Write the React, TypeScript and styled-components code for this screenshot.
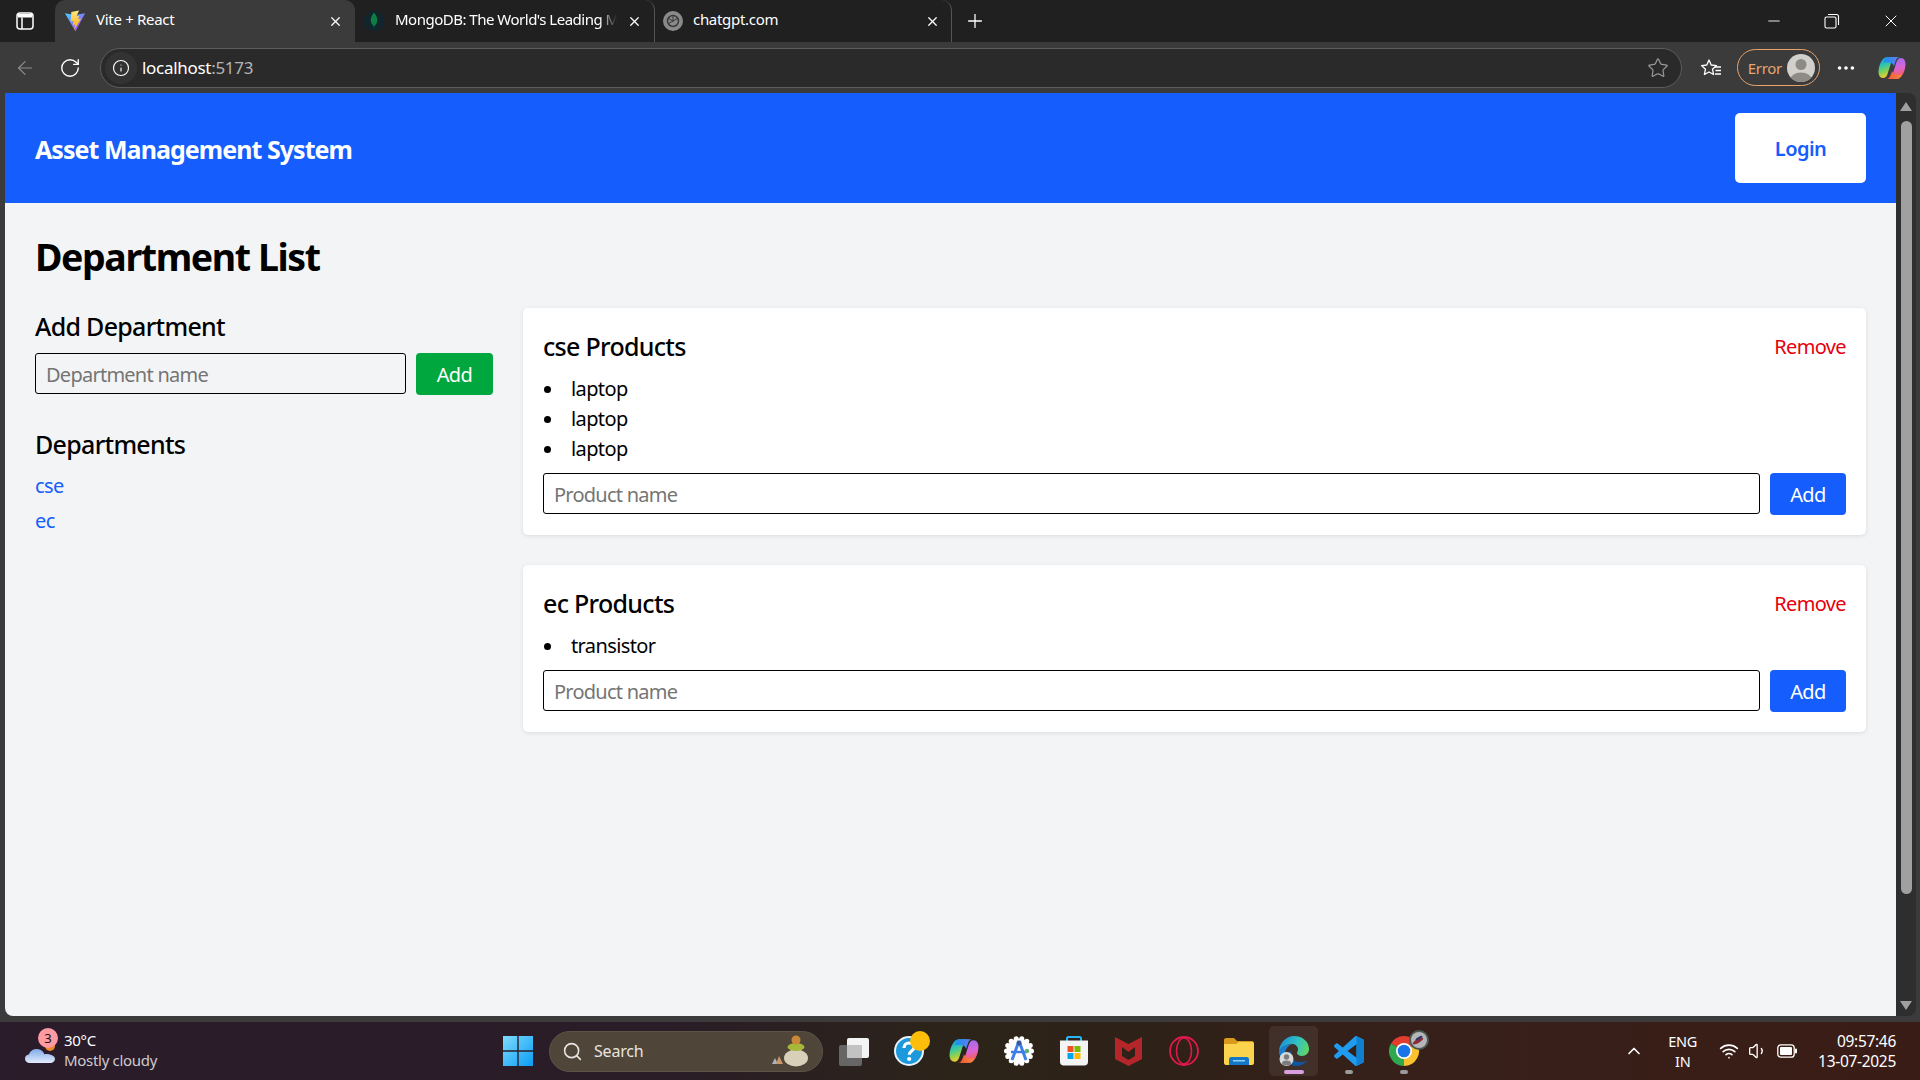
import React from 'react'
import styled, { createGlobalStyle } from 'styled-components'
import { ArrowLeft, ChevronUp, Info, Minus, MoreHorizontal, Plus, RotateCw, Search, Star, Volume1, Wifi, X } from 'lucide-react'

const UI_FONT = '"Noto Sans", "Open Sans", sans-serif'

const GlobalStyle = createGlobalStyle`
  html, body { margin: 0; padding: 0; height: 100%; overflow: hidden; }
  * { box-sizing: border-box; }
  body { font-family: ${UI_FONT}; background: #3b3b3b; }
`

const Screen = styled.div`
  width: 1920px;
  height: 1080px;
  display: flex;
  flex-direction: column;
  background: #3b3b3b;
`

/* browser chrome */
const TabStrip = styled.div`
  height: 42px;
  flex: none;
  display: flex;
  align-items: center;
  background: #202020;
  color: #fff;
`

const SidebarButton = styled.div`
  width: 55px;
  flex: none;
  display: flex;
  justify-content: center;
  padding-right: 5px;
`

const Tab = styled.div<{ $active?: boolean; $width: number; $end: number }>`
  width: ${(p) => p.$width}px;
  height: 42px;
  flex: none;
  display: flex;
  align-items: center;
  gap: 10px;
  padding: 0 ${(p) => p.$end}px 0 ${(p) => (p.$active ? 9 : 8)}px;
  background: ${(p) => (p.$active ? '#3b3b3b' : 'transparent')};
  border-radius: 10px 10px 0 0;
  border-right: ${(p) => (p.$active ? 'none' : '1px solid #555')};
  font-size: 15px;
  letter-spacing: -0.3px;
`

const TabTitle = styled.span`
  flex: 1;
  overflow: hidden;
  white-space: nowrap;
  padding-bottom: 4px;
`

const FadedTitle = styled(TabTitle)`
  letter-spacing: -0.5px;
  mask-image: linear-gradient(to right, #000 92%, transparent);
`

const NewTab = styled.div`
  margin-left: 12px;
  display: flex;
`

const WindowControls = styled.div`
  margin-left: auto;
  display: flex;
  align-items: center;
  gap: 41px;
  padding-right: 19px;
`

const Toolbar = styled.div`
  height: 51px;
  flex: none;
  display: flex;
  align-items: center;
  padding-left: 14px;
  background: #3b3b3b;
  color: #fff;
`

const NavButton = styled.div<{ $gap: number }>`
  display: flex;
  margin-right: ${(p) => p.$gap}px;
`

const AddressBar = styled.div`
  width: 1582px;
  height: 40px;
  flex: none;
  display: flex;
  align-items: center;
  gap: 5px;
  padding: 0 12px 0 4px;
  background: #2a2a2a;
  border: 1px solid #5c5c5c;
  border-radius: 20px;
  font-size: 17px;
  letter-spacing: -0.3px;
`

const InfoChip = styled.div`
  width: 32px;
  height: 32px;
  flex: none;
  display: flex;
  align-items: center;
  justify-content: center;
  border-radius: 50%;
  background: #333;
`

const Host = styled.span`
  color: #fff;
`

const Port = styled.span`
  color: #b5b5b5;
`

const AddressEnd = styled.div`
  margin-left: auto;
  display: flex;
`

const Favourites = styled.div`
  margin-left: 18px;
  display: flex;
`

const ProfilePill = styled.div`
  width: 83px;
  height: 37px;
  margin-left: 15px;
  display: flex;
  align-items: center;
  justify-content: flex-end;
  gap: 5px;
  padding-right: 4px;
  border: 1px solid #e8a46c;
  border-radius: 19px;
  color: #e8a46c;
  font-size: 15px;
  letter-spacing: -0.3px;
`

const Avatar = styled.div`
  width: 28px;
  height: 28px;
  display: flex;
`

const MoreButton = styled.div`
  margin-left: 15px;
  display: flex;
`

const CopilotSlot = styled.div`
  margin-left: 21px;
  display: flex;
`

/* page viewport */
const Viewport = styled.div`
  flex: 1;
  min-height: 0;
  display: flex;
  padding: 0 4px 5px 5px;
`

const Page = styled.div`
  flex: 1;
  display: flex;
  flex-direction: column;
  background: #f3f4f6;
  border-bottom-left-radius: 8px;
  color: #000;
  font-size: 20px;
  line-height: 30px;
  letter-spacing: -0.62px;
`

const Scrollbar = styled.div`
  width: 20px;
  flex: none;
  display: flex;
  flex-direction: column;
  align-items: center;
  justify-content: space-between;
  padding: 9px 0 6px;
  background: #2e2e2e;
  border-radius: 0 8px 8px 0;
`

const ScrollArrow = styled.div<{ $down?: boolean }>`
  width: 0;
  height: 0;
  border-left: 6px solid transparent;
  border-right: 6px solid transparent;
  ${(p) => (p.$down ? 'border-top: 9px solid #a0a0a0;' : 'border-bottom: 9px solid #a0a0a0;')}
`

const ScrollThumb = styled.div`
  width: 11px;
  height: 773px;
  margin-top: 2px;
  margin-bottom: 100px;
  background: #a0a0a0;
  border-radius: 6px;
`

const Header = styled.header`
  height: 110px;
  flex: none;
  display: flex;
  align-items: center;
  justify-content: space-between;
  padding: 20px 30px;
  background: #155dfc;
  color: #fff;
`

const Brand = styled.div`
  padding-top: 2px;
  font-size: 25px;
  font-weight: 700;
  line-height: 35px;
  letter-spacing: -0.95px;
`

const LoginButton = styled.button`
  width: 131px;
  height: 70px;
  border: none;
  border-radius: 5px;
  background: #fff;
  color: #155dfc;
  font: 600 20px ${UI_FONT};
  letter-spacing: -0.55px;
`

const Main = styled.main`
  flex: 1;
  padding: 31px 30px 30px;
`

const PageTitle = styled.h1`
  margin: 0 0 29px;
  font-size: 37.5px;
  line-height: 45px;
  font-weight: 700;
  letter-spacing: -1.4px;
`

const Columns = styled.div`
  display: grid;
  grid-template-columns: 458px 1fr;
  gap: 30px;
  align-items: start;
`

const SectionTitle = styled.h2<{ $top?: number }>`
  margin: ${(p) => p.$top ?? 0}px 0 8px;
  font-size: 25px;
  line-height: 37px;
  font-weight: 500;
  letter-spacing: -0.7px;
`

const FormRow = styled.div`
  display: flex;
  gap: 10px;
`

const TextInput = styled.input<{ $width?: number }>`
  flex: ${(p) => (p.$width ? 'none' : '1')};
  width: ${(p) => (p.$width ? `${p.$width}px` : 'auto')};
  min-width: 0;
  height: 41px;
  padding: 2px 10px 0;
  border: 1px solid #000;
  border-radius: 3px;
  background: transparent;
  color: #000;
  font: 400 20px ${UI_FONT};
  letter-spacing: -0.75px;
  outline: none;

  &::placeholder {
    color: #757575;
    opacity: 1;
  }
`

const SolidButton = styled.button<{ $color: 'green' | 'blue' }>`
  width: ${(p) => (p.$color === 'green' ? 77 : 76)}px;
  height: 42px;
  flex: none;
  border: none;
  border-radius: 4px;
  background: ${(p) => (p.$color === 'green' ? '#00a63e' : '#155dfc')};
  color: #fff;
  font: 400 20px ${UI_FONT};
  letter-spacing: -0.55px;
`

const DepartmentLink = styled.a`
  display: block;
  margin-bottom: 5px;
  color: #155dfc;
`

const Card = styled.section`
  margin-bottom: 30px;
  padding: 20px;
  background: #fff;
  border-radius: 5px;
  box-shadow: 0 1px 4px rgba(0, 0, 0, 0.1);
`

const CardHead = styled.div`
  display: flex;
  align-items: center;
  justify-content: space-between;
  margin-bottom: 8px;
`

const CardTitle = styled.h3`
  margin: 0;
  font-size: 25px;
  line-height: 37px;
  font-weight: 500;
  letter-spacing: -0.7px;
`

const RemoveLink = styled.span`
  color: #e7000b;
`

const ProductList = styled.ul`
  margin: 0 0 9px;
  padding: 1px 0 0;
  list-style: none;
`

const ProductItem = styled.li`
  display: flex;
  align-items: center;

  &::before {
    content: '';
    width: 7px;
    height: 7px;
    margin: 1px 20px 0 1px;
    border-radius: 50%;
    background: #000;
  }
`

/* taskbar */
const Taskbar = styled.div`
  height: 59px;
  flex: none;
  display: grid;
  grid-template-columns: 504px 926px 1fr;
  align-items: center;
  background: linear-gradient(90deg, #2a1c2a 0%, #2a1d27 35%, #2c2419 50%, #2e2118 60%, #38201a 75%, #3a1c16 100%);
  border-top: 1px solid #3e3a3c;
  color: #fff;
`

const Weather = styled.div`
  display: flex;
  align-items: center;
  padding-left: 24px;
`

const WeatherIcon = styled.div`
  position: relative;
  width: 40px;
  height: 40px;
  flex: none;
`

const Badge = styled.span`
  position: absolute;
  top: -3px;
  left: 14px;
  width: 20px;
  height: 20px;
  border-radius: 50%;
  background: #ff9aa2;
  color: #111;
  font-size: 13px;
  line-height: 20px;
  text-align: center;
`

const WeatherText = styled.div`
  padding-bottom: 2px;
  font-size: 15px;
  line-height: 20px;
  letter-spacing: -0.3px;
`

const Muted = styled.div`
  color: #cfcbce;
`

const TaskIcons = styled.div`
  display: flex;
  align-items: center;
`

const StartButton = styled.div`
  width: 30px;
  height: 30px;
  margin-left: -1px;
  margin-right: 16px;
  flex: none;
  display: flex;
`

const SearchBox = styled.div`
  width: 274px;
  height: 41px;
  flex: none;
  display: flex;
  align-items: center;
  gap: 11px;
  padding: 0 10px 0 12px;
  margin-right: 3px;
  background: #4f4539;
  border: 1px solid #5d5348;
  border-radius: 21px;
  color: #e8e4e0;
  font-size: 16px;
  letter-spacing: -0.2px;
`

const SearchArt = styled.div`
  margin-left: auto;
  display: flex;
`

const TaskSlot = styled.div<{ $active?: boolean; $dot?: 'pink' | 'grey' }>`
  position: relative;
  width: 49px;
  height: 50px;
  margin: 0 3px;
  flex: none;
  display: flex;
  align-items: center;
  justify-content: center;
  border-radius: 5px;
  background: ${(p) => (p.$active ? 'rgba(255,255,255,0.07)' : 'transparent')};

  svg {
    overflow: visible;
  }

  &::after {
    content: '';
    display: ${(p) => (p.$dot ? 'block' : 'none')};
    position: absolute;
    bottom: 2px;
    left: 50%;
    transform: translateX(-50%);
    width: ${(p) => (p.$dot === 'pink' ? 20 : 8)}px;
    height: 4px;
    border-radius: 2px;
    background: ${(p) => (p.$dot === 'pink' ? '#d9a0e0' : '#9a9a9a')};
  }
`

const Tray = styled.div`
  display: flex;
  align-items: center;
  justify-content: flex-end;
  padding-right: 24px;
  font-size: 14.5px;
  line-height: 20px;
  letter-spacing: -0.3px;
`

const TrayCaret = styled.div`
  margin-right: 24px;
  display: flex;
`

const LangBlock = styled.div`
  margin-right: 22px;
  text-align: center;
`

const TrayIcons = styled.div`
  display: flex;
  align-items: center;
  gap: 9px;
  margin-right: 21px;
`

const Clock = styled.div`
  padding-bottom: 1px;
  font-size: 15.5px;
  text-align: right;
`

/* drawn icons */
const SidebarIcon = () => (
  <svg width="20" height="20" viewBox="0 0 20 20" fill="none" stroke="#fff" strokeWidth="1.5">
    <rect x="2" y="2" width="16" height="16" rx="3" />
    <path d="M7 6.500V18" />
    <path d="M3 3h14v3.500H3Z" fill="#fff" stroke="none" />
  </svg>
)

const RestoreIcon = () => (
  <svg width="16" height="16" viewBox="0 0 16 16" fill="none" stroke="#fff" strokeWidth="1.100">
    <rect x="1" y="4" width="11" height="11" rx="1.500" />
    <path d="M4 1.500h8.500a2 2 0 0 1 2 2V12" />
  </svg>
)

const ViteLogo = () => (
  <svg width="22" height="22" viewBox="0 0 24 24">
    <defs>
      <linearGradient id="viteA" x1="0" y1="0" x2="1" y2="1">
        <stop offset="0" stopColor="#41d1ff" />
        <stop offset="1" stopColor="#bd34fe" />
      </linearGradient>
      <linearGradient id="viteB" x1="0" y1="0" x2="0" y2="1">
        <stop offset="0" stopColor="#ffea83" />
        <stop offset="1" stopColor="#ffa800" />
      </linearGradient>
    </defs>
    <path d="M1 3.500 12 5.500 23 3.500 12.500 23.500Z" fill="url(#viteA)" />
    <path d="M16.500 0.500 8 2.200l-.6 10.400 3-.7-.9 4.600 2.700-.8-1.200 6L18.600 9.600l-3.200.6 1.100-3.900-3 .5Z" fill="url(#viteB)" />
  </svg>
)

const MongoLeaf = () => (
  <svg width="22" height="22" viewBox="0 0 24 24">
    <circle cx="12" cy="12" r="11" fill="#10262c" />
    <path d="M12 3c3 3.500 4 6.500 3.400 9.500-.5 2.400-2 4-3 5l-.4 3-.4-3c-1-1-2.500-2.600-3-5C8 9.500 9 6.500 12 3Z" fill="#0d7f43" />
  </svg>
)

const ChatgptFavicon = () => (
  <svg width="20" height="20" viewBox="0 0 20 20" fill="none">
    <circle cx="10" cy="10" r="10" fill="#8a8a8a" />
    <circle cx="10" cy="10" r="5.500" stroke="#3a3a3a" strokeWidth="1.500" />
    <path d="M10 4.500v6M5.200 7.200l5 3M5.200 12.800l5-3M14.800 7.200l-5 3" stroke="#3a3a3a" strokeWidth="1" />
  </svg>
)

const FavouritesIcon = () => (
  <svg width="22" height="22" viewBox="0 0 22 22" fill="none" stroke="#fff" strokeWidth="1.300" strokeLinejoin="round">
    <path d="M9 3l2.200 5 5.300.6-4 3.600 1.100 5.300L9 15 4.400 17.500l1.100-5.300-4-3.600 5.300-.6Z" />
    <path d="M15 10h6M15.500 13.500H21M15 17h6" />
  </svg>
)

const AvatarIcon = () => (
  <svg width="28" height="28" viewBox="0 0 28 28">
    <defs>
      <clipPath id="avatarClip">
        <circle cx="14" cy="14" r="14" />
      </clipPath>
    </defs>
    <g clipPath="url(#avatarClip)">
      <rect width="28" height="28" fill="#d2d0cc" />
      <circle cx="14" cy="10.500" r="5.500" fill="#8e8b86" />
      <ellipse cx="14" cy="26" rx="11" ry="7.500" fill="#8e8b86" />
    </g>
  </svg>
)

const CopilotIcon = ({ size = 28, id }: { size?: number; id: string }) => (
  <svg width={size} height={size} viewBox="0 0 28 24">
    <defs>
      <linearGradient id={`${id}A`} x1="0" y1="0" x2="0.300" y2="1">
        <stop offset="0" stopColor="#1592ee" />
        <stop offset="0.450" stopColor="#35c6a8" />
        <stop offset="0.750" stopColor="#8fd14f" />
        <stop offset="1" stopColor="#f6c92f" />
      </linearGradient>
      <linearGradient id={`${id}B`} x1="0.300" y1="0" x2="0.500" y2="1">
        <stop offset="0" stopColor="#9a6cf0" />
        <stop offset="0.500" stopColor="#d964d8" />
        <stop offset="0.800" stopColor="#f0607a" />
        <stop offset="1" stopColor="#f7743a" />
      </linearGradient>
      <linearGradient id={`${id}C`} x1="0" y1="0" x2="1" y2="0">
        <stop offset="0" stopColor="#1592ee" />
        <stop offset="1" stopColor="#6a7cf2" />
      </linearGradient>
      <linearGradient id={`${id}D`} x1="0" y1="0" x2="1" y2="0">
        <stop offset="0" stopColor="#f2503c" />
        <stop offset="1" stopColor="#f58a3c" />
      </linearGradient>
    </defs>
    <path d="M9 1H18C15 1.500 14 4 13 7L9.500 18C9 20 7.500 22 5 22 2 22 .5 19 .5 16 .5 10 4 1 9 1Z" fill={`url(#${id}A)`} />
    <path d="M19 23H10C13 22.500 14 20 15 17L18.500 6C19 4 20.500 2 23 2 26 2 27.500 5 27.500 8 27.500 14 24 23 19 23Z" fill={`url(#${id}B)`} />
    <path d="M9 1H21C19 1.500 18 3.500 17.500 5.500L16 10C15 7.500 13 6.500 10 6.500H5.500C6.500 3.500 7.500 1 9 1Z" fill={`url(#${id}C)`} />
    <path d="M19 23H8C10.500 23 12 21 13 18L14 15C15 18 17 19 20 19H23.500C22.500 21.500 20.500 23 19 23Z" fill={`url(#${id}D)`} />
  </svg>
)

const BatteryIcon = () => (
  <svg width="20" height="14" viewBox="0 0 20 14" fill="none">
    <rect x="0.800" y="0.800" width="16.400" height="12.400" rx="3" stroke="#fff" strokeWidth="1.300" />
    <rect x="3" y="3" width="12" height="8" rx="1" fill="#fff" />
    <rect x="18" y="4.500" width="2" height="5" rx="1" fill="#fff" />
  </svg>
)

const CloudIcon = () => (
  <svg width="40" height="40" viewBox="0 0 40 40">
    <defs>
      <linearGradient id="cloudFill" x1="0" y1="0" x2="0" y2="1">
        <stop offset="0" stopColor="#7fabea" />
        <stop offset="1" stopColor="#e2ebfb" />
      </linearGradient>
    </defs>
    <circle cx="26" cy="15" r="5" fill="#f08a24" />
    <path d="M6 32c-3 0-5-1.800-5-4.300 0-2.300 1.600-4 3.800-4.200C6 20 9 18 12.500 18c3.800 0 6.800 2.200 7.800 5.200 .6-.2 1.200-.2 1.700-.2C26 23 31 25 31 27.700 31 30.200 29 32 26 32Z" fill="url(#cloudFill)" />
  </svg>
)

const WindowsLogo = () => (
  <svg width="30" height="30" viewBox="0 0 30 30">
    <defs>
      <linearGradient id="winFill" x1="0" y1="0" x2="1" y2="1">
        <stop offset="0" stopColor="#7fdcfb" />
        <stop offset="1" stopColor="#0a9cf5" />
      </linearGradient>
    </defs>
    <path d="M0 0h14.300v14.300H0ZM15.700 0H30v14.300H15.700ZM0 15.700h14.300V30H0ZM15.700 15.700H30V30H15.700Z" fill="url(#winFill)" />
  </svg>
)

const StonesArt = () => (
  <svg width="42" height="32" viewBox="0 0 42 32">
    <path d="M2 29l3-6 3 6Z" fill="#a8b4c0" />
    <path d="M6 29l3-8 4 8Z" fill="#c89868" />
    <ellipse cx="26" cy="23" rx="12" ry="8.500" fill="#d8d0b8" />
    <ellipse cx="26" cy="12" rx="8.500" ry="4" fill="#a6b83a" />
    <circle cx="26" cy="5" r="4.500" fill="#c88a3a" />
  </svg>
)

const TaskViewApp = () => (
  <svg width="32" height="32" viewBox="0 0 32 32">
    <rect x="1" y="10" width="23" height="21" rx="2" fill="#666" />
    <rect x="9" y="3" width="22" height="20" rx="2" fill="#f4f4f4" />
    <rect x="9" y="10" width="15" height="13" rx="1" fill="#c2c2c2" />
  </svg>
)

const HelpApp = () => (
  <svg width="36" height="36" viewBox="0 0 36 36">
    <circle cx="18" cy="18" r="14" fill="#1c98dc" stroke="#e8f4fb" strokeWidth="2" />
    <path d="M13 15c0-3 2.200-5 5-5s5 1.800 5 4.300c0 3.700-4.800 3.800-4.800 7.500" fill="none" stroke="#fff" strokeWidth="3.200" />
    <circle cx="18.200" cy="26" r="2.100" fill="#fff" />
    <circle cx="29" cy="8" r="10" fill="#fcbe0a" />
  </svg>
)

const scallops = Array.from({ length: 14 }, (_, i) => (i / 14) * Math.PI * 2)

const AtlasApp = () => (
  <svg width="32" height="32" viewBox="0 0 32 32">
    <circle cx="16" cy="16" r="12.500" fill="#fff" />
    {scallops.map((a) => (
      <circle key={a} cx={16 + 12.500 * Math.cos(a)} cy={16 + 12.500 * Math.sin(a)} r="2.500" fill="#fff" />
    ))}
    <path d="M16 6l-7 19M16 6l7 19" stroke="#3f7ee8" strokeWidth="3" fill="none" />
    <path d="M8 17h16" stroke="#3f7ee8" strokeWidth="2.500" />
    <circle cx="16" cy="8" r="2.500" fill="#3a5a9a" />
    <circle cx="24" cy="16" r="2.200" fill="#5cb46a" />
  </svg>
)

const StoreApp = () => (
  <svg width="30" height="30" viewBox="0 0 30 30">
    <path d="M8 6V2.500C8 1.500 8.500 1 9.500 1h11c1 0 1.500.5 1.500 1.500V6" fill="none" stroke="#29b6f6" strokeWidth="2" />
    <path d="M1 4.500h28V26c0 2-1.500 3.500-3.500 3.500h-21C2.500 29.500 1 28 1 26Z" fill="#f4f4f4" />
    <rect x="8.500" y="10" width="6" height="6" fill="#f25022" />
    <rect x="15.500" y="10" width="6" height="6" fill="#7fba00" />
    <rect x="8.500" y="17" width="6" height="6" fill="#00a4ef" />
    <rect x="15.500" y="17" width="6" height="6" fill="#ffb900" />
  </svg>
)

const McafeeApp = () => (
  <svg width="27" height="30" viewBox="0 0 27 30">
    <path d="M0 1L13.500 8 27 1V23L13.500 30 0 23ZM7 11V20L13.500 24 20 20V11L13.500 16Z" fill="#b5262b" fillRule="evenodd" />
  </svg>
)

const OperaApp = () => (
  <svg width="30" height="30" viewBox="0 0 30 30" fill="none">
    <circle cx="15" cy="15" r="14" stroke="#e0194a" strokeWidth="1.800" />
    <ellipse cx="15" cy="15" rx="7.500" ry="13" stroke="#e0194a" strokeWidth="1.600" />
  </svg>
)

const FilesApp = () => (
  <svg width="30" height="27" viewBox="0 0 30 27">
    <path d="M0 2c0-1 .8-2 2-2h8l3 3h15c1 0 2 1 2 2v4H0Z" fill="#d99a1c" />
    <path d="M0 6h12l3-2h13c1 0 2 1 2 2v19c0 1-1 2-2 2H2c-1 0-2-1-2-2Z" fill="#fcd34d" />
    <path d="M5 21c0-1 1-2 2-2h16c1 0 2 1 2 2v6H5Z" fill="#1478c8" />
    <rect x="9" y="22" width="12" height="1.500" fill="#8fd0f5" />
  </svg>
)

const EdgeApp = () => (
  <svg width="30" height="30" viewBox="0 0 30 30">
    <defs>
      <linearGradient id="edgeTop" x1="0" y1="0.300" x2="1" y2="0.600">
        <stop offset="0" stopColor="#1b8fd6" />
        <stop offset="0.550" stopColor="#2fc1c4" />
        <stop offset="1" stopColor="#5fd66a" />
      </linearGradient>
    </defs>
    <path d="M6 17C6 24 12 30 17 30 22 30 26 28 28.500 24.500 23 27 15 27 12.500 21.500 11.500 19.500 12 17 13 15Z" fill="#0f559f" />
    <path d="M15 0C24 0 30 6 30 13 30 17 27 20 23 20 20 20 18 18.500 18 17 18 16 19 15.500 19 13.500 19 10 16 8 13 8 8 8 3 11 0 15 .5 7 7 0 15 0Z" fill="url(#edgeTop)" />
    <path d="M0 15C3 11 8 8 13 8 8.500 10 6 14 6 18 6 22 7 25 10 28 4 26 0 21 0 15Z" fill="#1c7ed0" />
    <circle cx="7.500" cy="23" r="7" fill="#d8d8d8" />
    <circle cx="7.500" cy="21" r="2.700" fill="#7c7c7c" />
    <ellipse cx="7.500" cy="27" rx="4.500" ry="2.500" fill="#7c7c7c" />
  </svg>
)

const VscodeApp = () => (
  <svg width="30" height="30" viewBox="0 0 24 24">
    <path d="M23.150 2.587L18.210.21a1.494 1.494 0 0 0-1.705.29l-9.460 8.630-4.120-3.128a.999.999 0 0 0-1.276.057L.327 7.261A1 1 0 0 0 .326 8.740L3.899 12 .326 15.260a1 1 0 0 0 .001 1.479L1.650 17.940a.999.999 0 0 0 1.276.057l4.120-3.128 9.460 8.630a1.492 1.492 0 0 0 1.704.29l4.942-2.377A1.500 1.500 0 0 0 24 20.060V3.939a1.500 1.500 0 0 0-.85-1.352zm-5.146 14.861L10.826 12l7.178-5.448v10.896z" fill="#1f9cf0" />
    <path d="M18 .1l5.150 2.487A1.500 1.500 0 0 1 24 3.939V20.060a1.500 1.500 0 0 1-.85 1.353L18 23.900Z" fill="#0f7fd0" />
  </svg>
)

const ChromeApp = () => (
  <svg width="30" height="30" viewBox="0 0 30 30">
    <path d="M15 15L2 7.500A15 15 0 0 1 28 7.500Z" fill="#e23d2e" />
    <path d="M15 15L28 7.500A15 15 0 0 1 15 30Z" fill="#fbc02d" />
    <path d="M15 15L15 30A15 15 0 0 1 2 7.500Z" fill="#2fa84f" />
    <circle cx="15" cy="15" r="8" fill="#fff" />
    <circle cx="15" cy="15" r="6.300" fill="#1a73e8" />
    <circle cx="30" cy="4" r="10" fill="#4a5a50" />
    <circle cx="30" cy="4" r="8" fill="#b4b6ba" />
    <ellipse cx="29" cy="5" rx="6" ry="2" transform="rotate(-30 29 5)" fill="#8c2a3a" />
    <ellipse cx="30" cy="2" rx="4" ry="1.200" transform="rotate(-30 30 2)" fill="#2a3a6a" />
  </svg>
)

const products = [
  { name: 'cse', items: ['laptop', 'laptop', 'laptop'] },
  { name: 'ec', items: ['transistor'] },
]

const App = () => (
  <Screen>
    <GlobalStyle />
    <TabStrip>
      <SidebarButton>
        <SidebarIcon />
      </SidebarButton>
      <Tab $active $width={300} $end={12}>
        <ViteLogo />
        <TabTitle>Vite + React</TabTitle>
        <X size={15} />
      </Tab>
      <Tab $width={300} $end={12}>
        <MongoLeaf />
        <FadedTitle>MongoDB: The World's Leading M</FadedTitle>
        <X size={15} />
      </Tab>
      <Tab $width={297} $end={11}>
        <ChatgptFavicon />
        <TabTitle>chatgpt.com</TabTitle>
        <X size={15} />
      </Tab>
      <NewTab>
        <Plus size={22} strokeWidth={1.4} />
      </NewTab>
      <WindowControls>
        <Minus size={18} strokeWidth={1.2} />
        <RestoreIcon />
        <X size={20} strokeWidth={1.2} />
      </WindowControls>
    </TabStrip>

    <Toolbar>
      <NavButton $gap={23}>
        <ArrowLeft size={22} strokeWidth={1.3} color="#8d8d8d" />
      </NavButton>
      <NavButton $gap={19}>
        <RotateCw size={22} strokeWidth={1.5} />
      </NavButton>
      <AddressBar>
        <InfoChip>
          <Info size={18} strokeWidth={1.5} />
        </InfoChip>
        <span>
          <Host>localhost</Host>
          <Port>:5173</Port>
        </span>
        <AddressEnd>
          <Star size={22} strokeWidth={1.3} color="#9a9a9a" />
        </AddressEnd>
      </AddressBar>
      <Favourites>
        <FavouritesIcon />
      </Favourites>
      <ProfilePill>
        Error
        <Avatar>
          <AvatarIcon />
        </Avatar>
      </ProfilePill>
      <MoreButton>
        <MoreHorizontal size={22} strokeWidth={2} />
      </MoreButton>
      <CopilotSlot>
        <CopilotIcon id="copilotTop" />
      </CopilotSlot>
    </Toolbar>

    <Viewport>
      <Page>
        <Header>
          <Brand>Asset Management System</Brand>
          <LoginButton>Login</LoginButton>
        </Header>
        <Main>
          <PageTitle>Department List</PageTitle>
          <Columns>
            <div>
              <SectionTitle>Add Department</SectionTitle>
              <FormRow>
                <TextInput placeholder="Department name" $width={371} />
                <SolidButton $color="green">Add</SolidButton>
              </FormRow>
              <SectionTitle $top={31}>Departments</SectionTitle>
              <DepartmentLink>cse</DepartmentLink>
              <DepartmentLink>ec</DepartmentLink>
            </div>
            <div>
              {products.map((dept) => (
                <Card key={dept.name}>
                  <CardHead>
                    <CardTitle>{dept.name} Products</CardTitle>
                    <RemoveLink>Remove</RemoveLink>
                  </CardHead>
                  <ProductList>
                    {dept.items.map((item, i) => (
                      <ProductItem key={i}>{item}</ProductItem>
                    ))}
                  </ProductList>
                  <FormRow>
                    <TextInput placeholder="Product name" />
                    <SolidButton $color="blue">Add</SolidButton>
                  </FormRow>
                </Card>
              ))}
            </div>
          </Columns>
        </Main>
      </Page>
      <Scrollbar>
        <ScrollArrow />
        <ScrollThumb />
        <ScrollArrow $down />
      </Scrollbar>
    </Viewport>

    <Taskbar>
      <Weather>
        <WeatherIcon>
          <CloudIcon />
          <Badge>3</Badge>
        </WeatherIcon>
        <WeatherText>
          <div>30°C</div>
          <Muted>Mostly cloudy</Muted>
        </WeatherText>
      </Weather>
      <TaskIcons>
        <StartButton>
          <WindowsLogo />
        </StartButton>
        <SearchBox>
          <Search size={21} strokeWidth={1.8} />
          Search
          <SearchArt>
            <StonesArt />
          </SearchArt>
        </SearchBox>
        <TaskSlot><TaskViewApp /></TaskSlot>
        <TaskSlot><HelpApp /></TaskSlot>
        <TaskSlot><CopilotIcon size={30} id="copilotBar" /></TaskSlot>
        <TaskSlot><AtlasApp /></TaskSlot>
        <TaskSlot><StoreApp /></TaskSlot>
        <TaskSlot><McafeeApp /></TaskSlot>
        <TaskSlot><OperaApp /></TaskSlot>
        <TaskSlot><FilesApp /></TaskSlot>
        <TaskSlot $active $dot="pink"><EdgeApp /></TaskSlot>
        <TaskSlot $dot="grey"><VscodeApp /></TaskSlot>
        <TaskSlot $dot="grey"><ChromeApp /></TaskSlot>
      </TaskIcons>
      <Tray>
        <TrayCaret>
          <ChevronUp size={20} strokeWidth={2} />
        </TrayCaret>
        <LangBlock>
          ENG
          <br />
          IN
        </LangBlock>
        <TrayIcons>
          <Wifi size={20} strokeWidth={2} />
          <Volume1 size={20} strokeWidth={1.6} />
          <BatteryIcon />
        </TrayIcons>
        <Clock>
          09:57:46
          <br />
          13-07-2025
        </Clock>
      </Tray>
    </Taskbar>
  </Screen>
)

export default App
